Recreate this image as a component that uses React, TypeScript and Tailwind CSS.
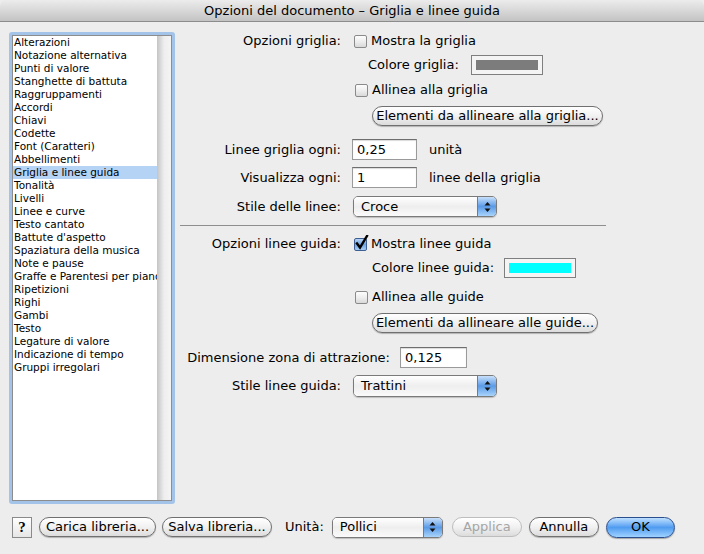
import React from 'react';

const font = { fontFamily: '"DejaVu Sans", "Liberation Sans", sans-serif' };

const categories = [
  'Alterazioni',
  'Notazione alternativa',
  'Punti di valore',
  'Stanghette di battuta',
  'Raggruppamenti',
  'Accordi',
  'Chiavi',
  'Codette',
  'Font (Caratteri)',
  'Abbellimenti',
  'Griglia e linee guida',
  'Tonalità',
  'Livelli',
  'Linee e curve',
  'Testo cantato',
  "Battute d'aspetto",
  'Spaziatura della musica',
  'Note e pause',
  'Graffe e Parentesi per piano',
  'Ripetizioni',
  'Righi',
  'Gambi',
  'Testo',
  'Legature di valore',
  'Indicazione di tempo',
  'Gruppi irregolari',
];

function Checkbox({ checked, label }: { checked?: boolean; label: string }) {
  return (
    <div className="flex items-center h-[18px]">
      <div
        className={`relative w-[13px] h-[13px] rounded-[2px] border ${
          checked
            ? 'border-[#3d5f94] bg-gradient-to-b from-[#b9d4f2] via-[#6fa3e0] to-[#a8cdf4]'
            : 'border-[#8a8a8a] bg-gradient-to-b from-[#fdfdfd] via-[#eeeeee] to-[#d9d9d9]'
        }`}
      >
        {checked && (
          <svg className="absolute -top-[4px] left-[0px]" width="14" height="15" viewBox="0 0 14 15">
            <path d="M2 8.5 L5 12.5 L12 1" stroke="#000" strokeWidth="2.4" fill="none" strokeLinecap="square" />
          </svg>
        )}
      </div>
      <span className="ml-[4px] text-[13px] text-black">{label}</span>
    </div>
  );
}

function PillButton({ label, className = '', disabled }: { label: string; className?: string; disabled?: boolean }) {
  return (
    <div
      className={`flex items-center justify-center h-[20px] rounded-full border text-[13px] bg-gradient-to-b from-[#ffffff] via-[#f1f1f1] to-[#dcdcdc] ${
        disabled ? 'border-[#bdbdbd] text-[#a5a5a5]' : 'border-[#707070] text-black shadow-[0_1px_1px_rgba(0,0,0,0.25)]'
      } ${className}`}
    >
      {label}
    </div>
  );
}

function PopUp({ value, className = '' }: { value: string; className?: string }) {
  return (
    <div
      className={`flex items-stretch h-[21px] rounded-[5px] border border-[#7a7a7a] overflow-hidden shadow-[0_1px_1px_rgba(0,0,0,0.2)] ${className}`}
    >
      <div className="flex-1 flex items-center pl-[7px] text-[13px] text-black bg-gradient-to-b from-[#ffffff] via-[#eeeeee] to-[#fafafa]">
        {value}
      </div>
      <div className="w-[19px] flex items-center justify-center border-l border-[#5a7fb5] bg-gradient-to-b from-[#c8e0fa] via-[#5a9ae6] to-[#a9d4fb]">
        <svg width="7" height="12" viewBox="0 0 7 12">
          <path d="M3.5 1 L6.5 4.5 L0.5 4.5 Z" fill="#111" />
          <path d="M3.5 11 L6.5 7.5 L0.5 7.5 Z" fill="#111" />
        </svg>
      </div>
    </div>
  );
}

function TextField({ value, className = '' }: { value: string; className?: string }) {
  return (
    <div
      className={`h-[21px] bg-white border border-[#9a9a9a] border-t-[#6e6e6e] shadow-[inset_0_1px_1px_rgba(0,0,0,0.15)] flex items-center pl-[4px] text-[13px] text-black ${className}`}
    >
      {value}
    </div>
  );
}

function Swatch({ color, className = '' }: { color: string; className?: string }) {
  return (
    <div className={`h-[20px] w-[72px] border border-[#7f7f7f] bg-[#f4f4f4] p-[4px] ${className}`}>
      <div className="w-full h-full" style={{ background: color }} />
    </div>
  );
}

function Label({ text, w = 'w-[162px]' }: { text: string; w?: string }) {
  return <div className={`${w} text-right text-[13px] text-black pr-[1px]`}>{text}</div>;
}

export default function App() {
  return (
    <div className="w-[704px] h-[554px] bg-[#ededed] flex flex-col overflow-hidden select-none" style={font}>
      {/* title bar */}
      <div className="h-[22px] flex items-center justify-center rounded-t-[6px] border-b border-[#8c8c8c] bg-gradient-to-b from-[#ececec] via-[#d8d8d8] to-[#c3c3c3] text-[13px] text-black">
        Opzioni del documento – Griglia e linee guida
      </div>

      <div className="flex flex-1">
        {/* category list */}
        <div className="ml-[9px] mt-[10px] w-[166px] h-[472px] rounded-[3px] border-[3px] border-[#a3c4e8] flex">
          <div className="flex-1 bg-white border-l border-t border-b border-[#8d8d8d] overflow-hidden">
            {categories.map((c) => (
              <div
                key={c}
                className={`h-[13px] leading-[13px] pl-[1px] text-[10.5px] whitespace-nowrap text-black ${
                  c === 'Griglia e linee guida' ? 'bg-[#b5d3f5]' : ''
                }`}
              >
                {c}
              </div>
            ))}
          </div>
          <div className="w-[15px] border-t border-b border-r border-[#8d8d8d] bg-gradient-to-r from-[#c4c4c4] via-[#eeeeee] to-[#f4f4f4]" />
        </div>

        {/* options */}
        <div className="ml-[5px] pt-[10px] flex flex-col w-[426px]">
          <div className="flex items-center h-[18px]">
            <Label text="Opzioni griglia:" />
            <div className="ml-[12px]">
              <Checkbox label="Mostra la griglia" />
            </div>
          </div>
          <div className="flex items-center mt-[5px] pl-[188px]">
            <span className="text-[13px]">Colore griglia:</span>
            <Swatch color="#7c7c7c" className="ml-[12px]" />
          </div>
          <div className="mt-[6px] pl-[175px]">
            <Checkbox label="Allinea alla griglia" />
          </div>
          <div className="mt-[7px] pl-[192px]">
            <PillButton label="Elementi da allineare alla griglia..." className="w-[231px]" />
          </div>

          <div className="flex items-center mt-[13px]">
            <Label text="Linee griglia ogni:" />
            <TextField value="0,25" className="ml-[10px] w-[65px]" />
            <span className="ml-[12px] text-[13px]">unità</span>
          </div>
          <div className="flex items-center mt-[7px]">
            <Label text="Visualizza ogni:" />
            <TextField value="1" className="ml-[10px] w-[65px]" />
            <span className="ml-[12px] text-[13px]">linee della griglia</span>
          </div>
          <div className="flex items-center mt-[8px]">
            <Label text="Stile delle linee:" />
            <PopUp value="Croce" className="ml-[11px] w-[144px]" />
          </div>

          <div className="mt-[8px] h-px bg-[#8e8e8e]" />

          <div className="flex items-center h-[18px] mt-[9px]">
            <Label text="Opzioni linee guida:" />
            <div className="ml-[12px]">
              <Checkbox checked label="Mostra linee guida" />
            </div>
          </div>
          <div className="flex items-center mt-[5px] pl-[192px]">
            <span className="text-[13px]">Colore linee guida:</span>
            <Swatch color="#00ffff" className="ml-[10px]" />
          </div>
          <div className="mt-[10px] pl-[175px]">
            <Checkbox label="Allinea alle guide" />
          </div>
          <div className="mt-[7px] pl-[192px]">
            <PillButton label="Elementi da allineare alle guide..." className="w-[226px]" />
          </div>

          <div className="flex items-center mt-[14px]">
            <Label text="Dimensione zona di attrazione:" w="w-[211px]" />
            <TextField value="0,125" className="ml-[9px] w-[67px]" />
          </div>
          <div className="flex items-center mt-[7px]">
            <Label text="Stile linee guida:" />
            <PopUp value="Trattini" className="ml-[11px] w-[144px] h-[22px]" />
          </div>
        </div>
      </div>

      {/* footer */}
      <div className="h-[38px] pb-[16px] flex items-center pl-[12px]">
        <div className="w-[20px] h-[21px] border border-[#8a8a8a] bg-gradient-to-b from-white to-[#e6e6e6] flex items-center justify-center text-[15px] font-bold" style={{ fontFamily: '"Liberation Serif", serif' }}>
          ?
        </div>
        <PillButton label="Carica libreria..." className="ml-[7px] w-[117px]" />
        <PillButton label="Salva libreria..." className="ml-[6px] w-[110px]" />
        <span className="ml-[13px] text-[13px]">Unità:</span>
        <PopUp value="Pollici" className="ml-[8px] w-[111px]" />
        <PillButton label="Applica" disabled className="ml-[9px] w-[70px]" />
        <PillButton label="Annulla" className="ml-[7px] w-[70px]" />
        <div className="ml-[7px] w-[69px] h-[21px] rounded-full border border-[#2a4f8f] bg-gradient-to-b from-[#bfe0ff] via-[#4f9cf0] to-[#9fd2ff] flex items-center justify-center text-[13px] text-black shadow-[0_1px_1px_rgba(0,0,0,0.3)]">
          OK
        </div>
      </div>
    </div>
  );
}
